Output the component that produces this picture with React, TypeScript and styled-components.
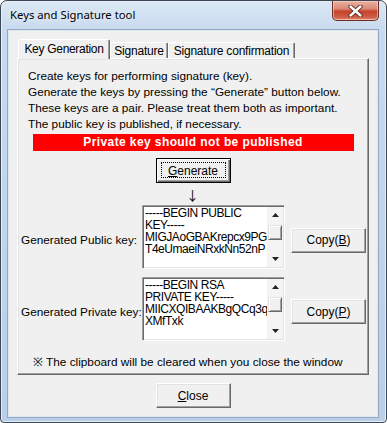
import React from 'react';
import styled, { createGlobalStyle } from 'styled-components';

const Global = createGlobalStyle`
  html, body { margin: 0; padding: 0; background: #ffffff; }
  body { width: 387px; height: 423px; overflow: hidden; }
  * { box-sizing: border-box; }
`;

const Window = styled.div`
  width: 387px;
  height: 423px;
  border: 1px solid #3c4654;
  border-radius: 7px 7px 4px 4px;
  background: linear-gradient(180deg, #dbe7f4 0px, #c8daee 30px, #b9cfe8 100%);
  box-shadow: inset 1px 1px 0 #e6eef7, inset -1px -1px 0 #e6eef7;
  display: flex;
  flex-direction: column;
  padding: 0 8px 5px 7px;
  font-family: "Liberation Sans", Arial, sans-serif;
  color: #000;
`;

const TitleBar = styled.div`
  height: 29px;
  display: flex;
  align-items: flex-start;
  justify-content: space-between;
`;

const TitleText = styled.div`
  margin: 6px 0 0 2px;
  font-family: "Noto Sans", "Open Sans", sans-serif;
  font-size: 11.3px;
  line-height: 16px;
  color: #000;
  text-shadow: 0 0 6px rgba(255, 255, 255, 0.9);
`;

const CloseBox = styled.div`
  width: 47px;
  height: 20px;
  margin-right: -1px;
  border: 1px solid #6b2f25;
  border-top: none;
  border-radius: 0 0 5px 5px;
  background: linear-gradient(180deg, #eab1a3 0%, #dc8a78 40%, #c4432d 55%, #cf5e47 85%, #e08d72 100%);
  box-shadow: inset 0 0 0 1px rgba(255, 220, 210, 0.55);
  display: flex;
  align-items: center;
  justify-content: center;
`;

const Client = styled.div`
  flex: 1;
  background: #f0f0f0;
  border: 1px solid #dfe7f0;
  box-shadow: 0 0 0 1px #93a8c2;
  display: flex;
  flex-direction: column;
  padding: 7px 8px 8px 8px;
  font-size: 12px;
`;

const TabStrip = styled.div`
  height: 20px;
  display: flex;
  align-items: flex-end;
  padding-left: 1px;
  position: relative;
  z-index: 1;
`;

const Tab = styled.div<{ $active?: boolean; $w: number }>`
  width: ${(p) => p.$w}px;
  height: ${(p) => (p.$active ? 20 : 16)}px;
  margin-bottom: ${(p) => (p.$active ? -1 : 0)}px;
  padding-bottom: ${(p) => (p.$active ? 2 : 0)}px;
  background: #f0f0f0;
  border: 1px solid;
  border-color: #ffffff #696969 transparent #ffffff;
  border-bottom: none;
  border-radius: 2px 2px 0 0;
  box-shadow: inset -1px 0 0 #a0a0a0;
  display: flex;
  align-items: center;
  justify-content: center;
  font-size: 12px;
  letter-spacing: ${(p) => (p.$active ? -0.3 : -0.2)}px;
  line-height: 14px;
  white-space: nowrap;
`;

const Panel = styled.div`
  height: 317px;
  background: #f0f0f0;
  border: 1px solid;
  border-color: #ffffff #696969 #696969 #ffffff;
  box-shadow: inset -1px -1px 0 #a0a0a0, inset 1px 1px 0 #e3e3e3;
  display: flex;
  flex-direction: column;
`;

const Intro = styled.div`
  padding: 9px 0 0 10px;
  font-size: 11.8px;
  line-height: 16px;
`;

const Line = styled.div`
  height: 16px;
  white-space: nowrap;
`;

const Warning = styled.div`
  width: 321px;
  height: 17px;
  margin: 2px auto 0;
  background: #ff0000;
  color: #ffffff;
  font-weight: bold;
  font-size: 12px;
  letter-spacing: 0.4px;
  line-height: 17px;
  text-align: center;
`;

const Button = styled.button<{ $default?: boolean }>`
  position: relative;
  width: 75px;
  height: 25px;
  padding: 0;
  font-family: "Liberation Sans", Arial, sans-serif;
  font-size: 12px;
  color: #000;
  background: #f0f0f0;
  border: 1px solid;
  border-color: ${(p) => (p.$default ? '#000000' : '#ffffff #696969 #696969 #ffffff')};
  box-shadow: ${(p) =>
    p.$default
      ? 'inset 1px 1px 0 #ffffff, inset -1px -1px 0 #696969, inset -2px -2px 0 #a0a0a0'
      : 'inset -1px -1px 0 #a0a0a0, inset 1px 1px 0 #e3e3e3'};
  &::after {
    content: '';
    display: ${(p) => (p.$default ? 'block' : 'none')};
    position: absolute;
    inset: 3px 4px 4px 4px;
    border: 1px dotted #000;
  }
`;

const CenterButton = styled(Button)`
  align-self: center;
`;

const GenerateButton = styled(CenterButton)`
  margin-top: 7px;
`;

const CloseButton = styled(CenterButton)`
  margin-top: 8px;
`;

const Arrow = styled.div`
  margin-top: 4px;
  height: 15px;
  line-height: 15px;
  text-align: center;
  font-family: "Noto Sans CJK JP", "DejaVu Sans", sans-serif;
  font-size: 13px;
  color: #000;
  padding-right: 1px;
`;

const KeyRow = styled.div<{ $gap: number; $shift: number }>`
  margin-top: ${(p) => p.$gap}px;
  padding-left: 3px;
  display: grid;
  grid-template-columns: 115px 143px 75px;
  column-gap: 6px;
  align-items: center;
  & > .shift {
    margin-top: ${(p) => p.$shift}px;
  }
`;

const Label = styled.div`
  white-space: nowrap;
  font-size: 11.8px;
  line-height: 16px;
`;

const TextBox = styled.div`
  height: 64px;
  border: 1px solid;
  border-color: #a0a0a0 #ffffff #ffffff #a0a0a0;
  box-shadow: inset 1px 1px 0 #696969, inset -1px -1px 0 #e3e3e3;
  padding: 1px;
  display: flex;
  background: #ffffff;
`;

const TextContent = styled.div`
  flex: 1;
  overflow: hidden;
  white-space: pre;
  font-size: 12px;
  line-height: 12px;
  letter-spacing: -0.45px;
  padding-left: 1px;
  background: #ffffff;
`;

const ScrollBar = styled.div`
  width: 16px;
  display: flex;
  flex-direction: column;
  background: #f4f4f4;
`;

const ScrollArrow = styled.div`
  height: 16px;
  display: flex;
  align-items: center;
  justify-content: center;
`;

const ScrollTrack = styled.div`
  flex: 1;
  padding-top: 2px;
`;

const Thumb = styled.div`
  height: 15px;
  margin: 0 1px 0 1px;
  background: #f0f0f0;
  border: 1px solid;
  border-color: #e3e3e3 #696969 #696969 #e3e3e3;
  box-shadow: inset 1px 1px 0 #ffffff, inset -1px -1px 0 #a0a0a0;
`;

const Note = styled.div`
  margin-top: 13px;
  padding-left: 15px;
  font-size: 11.8px;
  line-height: 16px;
  white-space: nowrap;
`;

const Tri = ({ up }: { up?: boolean }) => (
  <svg width="7" height="4" viewBox="0 0 7 4">
    <path d={up ? 'M3.5 0 L7 4 L0 4 Z' : 'M0 0 L7 0 L3.5 4 Z'} fill="#222" />
  </svg>
);

const KeyBox = ({ text }: { text: string }) => (
  <TextBox>
    <TextContent>{text}</TextContent>
    <ScrollBar>
      <ScrollArrow>
        <Tri up />
      </ScrollArrow>
      <ScrollTrack>
        <Thumb />
      </ScrollTrack>
      <ScrollArrow>
        <Tri />
      </ScrollArrow>
    </ScrollBar>
  </TextBox>
);

export default function App() {
  return (
    <>
      <Global />
      <Window>
        <TitleBar>
          <TitleText>Keys and Signature tool</TitleText>
          <CloseBox>
            <svg width="15" height="12" viewBox="0 0 15 12">
              <path d="M2.5 1.5 L12.5 10.5 M12.5 1.5 L2.5 10.5" stroke="#5a2118" strokeWidth="4.2" strokeLinecap="round" />
              <path d="M2.5 1.5 L12.5 10.5 M12.5 1.5 L2.5 10.5" stroke="#ffffff" strokeWidth="2.4" strokeLinecap="round" />
            </svg>
          </CloseBox>
        </TitleBar>
        <Client>
          <TabStrip>
            <Tab $active $w={92}>Key Generation</Tab>
            <Tab $w={58}>Signature</Tab>
            <Tab $w={127}>Signature confirmation</Tab>
          </TabStrip>
          <Panel>
            <Intro>
              <Line>Create keys for performing signature (key).</Line>
              <Line>Generate the keys by pressing the “Generate” button below.</Line>
              <Line>These keys are a pair. Please treat them both as important.</Line>
              <Line>The public key is published, if necessary.</Line>
            </Intro>
            <Warning>Private key should not be published</Warning>
            <GenerateButton $default>
              <u>G</u>enerate
            </GenerateButton>
            <Arrow>↓</Arrow>
            <KeyRow $gap={3} $shift={6}>
              <Label className="shift">Generated Public key:</Label>
              <KeyBox text={'-----BEGIN PUBLIC\nKEY-----\nMIGJAoGBAKrepcx9PG\nT4eUmaeiNRxkNn52nP'} />
              <Button className="shift">
                Copy(<u>B</u>)
              </Button>
            </KeyRow>
            <KeyRow $gap={8} $shift={5}>
              <Label className="shift">Generated Private key:</Label>
              <KeyBox text={'-----BEGIN RSA\nPRIVATE KEY-----\nMIICXQIBAAKBgQCq3q\nXMfTxk'} />
              <Button className="shift">
                Copy(<u>P</u>)
              </Button>
            </KeyRow>
            <Note>※ The clipboard will be cleared when you close the window</Note>
          </Panel>
          <CloseButton>
            <u>C</u>lose
          </CloseButton>
        </Client>
      </Window>
    </>
  );
}
